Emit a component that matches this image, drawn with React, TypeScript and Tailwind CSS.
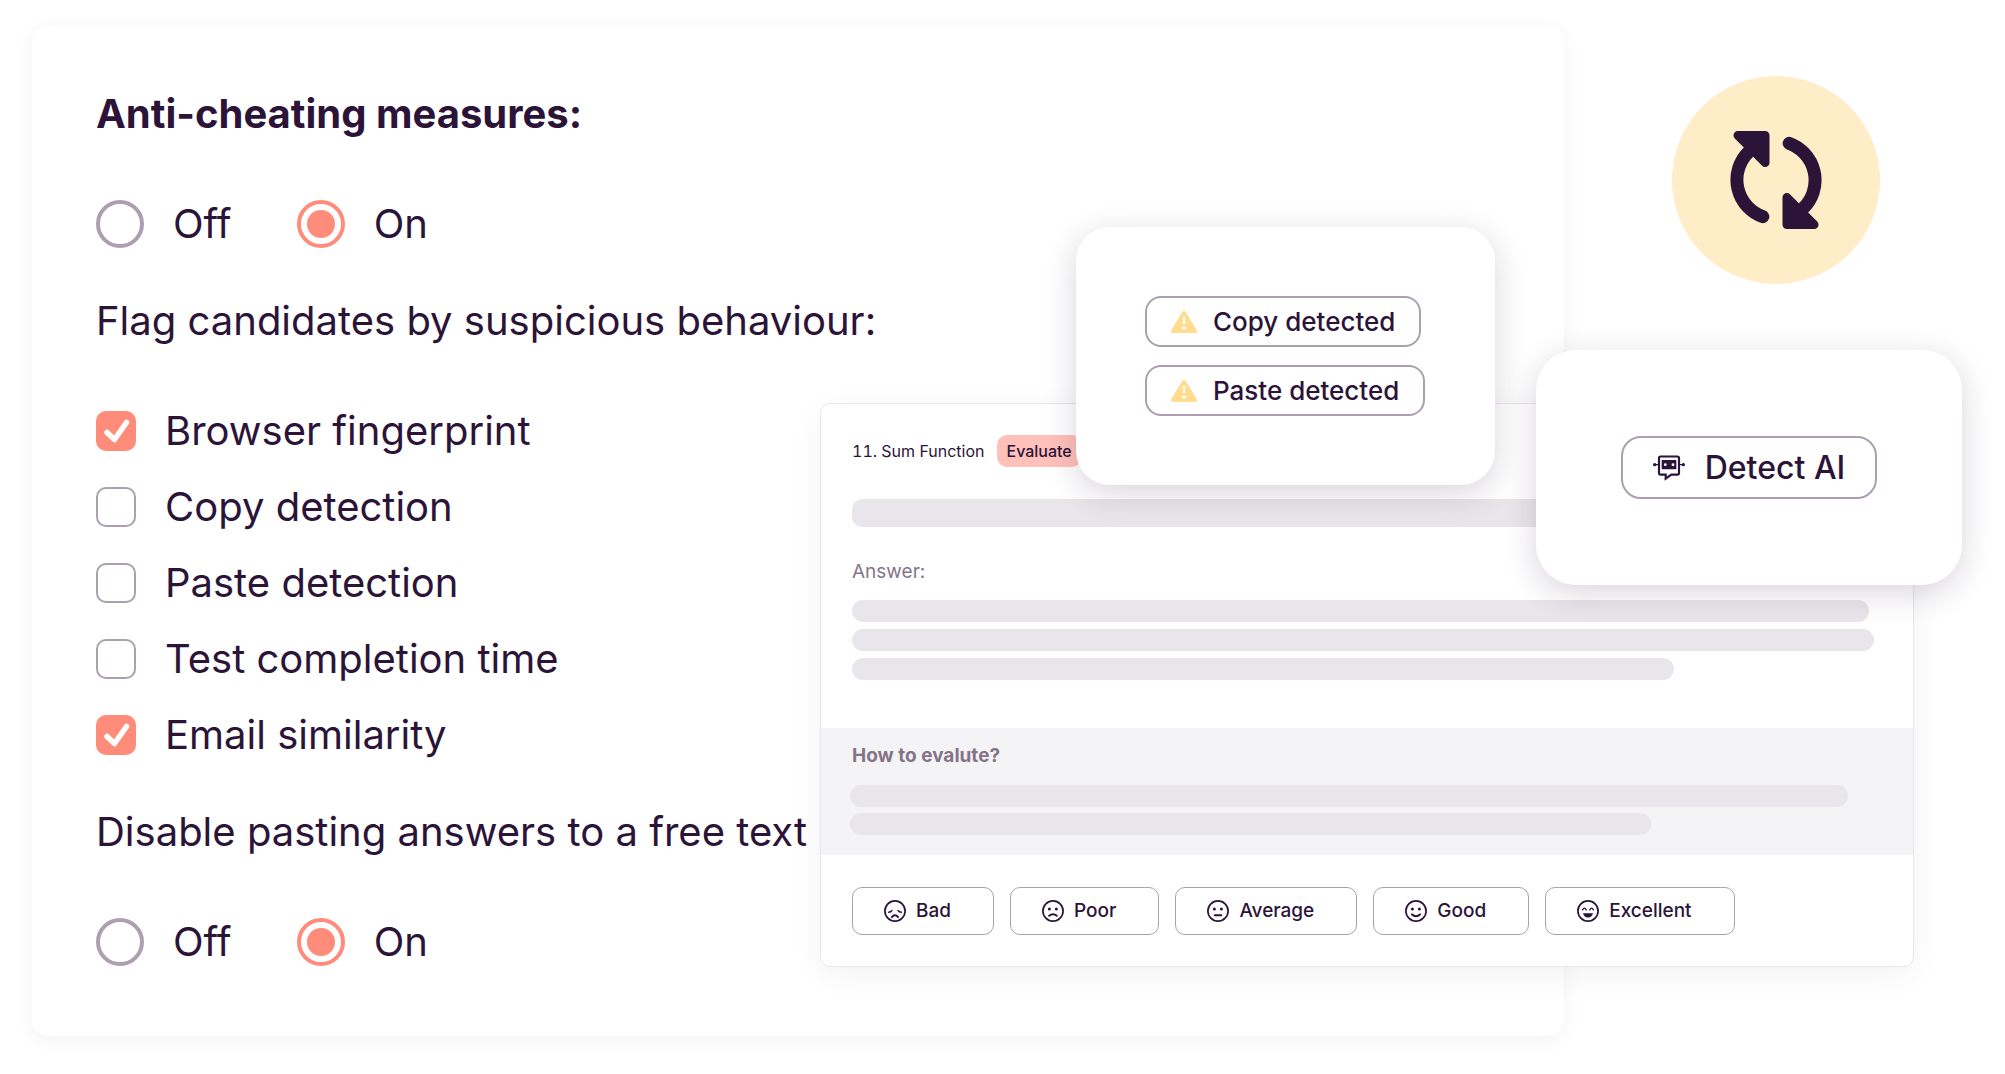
import { ReactNode, useState } from 'react';

const FLAGS = [
  { id: 'fingerprint', label: 'Browser fingerprint', checked: true },
  { id: 'copy', label: 'Copy detection', checked: false },
  { id: 'paste', label: 'Paste detection', checked: false },
  { id: 'time', label: 'Test completion time', checked: false },
  { id: 'email', label: 'Email similarity', checked: true },
];

const Face = ({ children }: { children: ReactNode }) => (
  <svg viewBox="0 0 24 24" className="size-6" fill="none" stroke="currentColor" strokeWidth="1.7" strokeLinecap="round" aria-hidden="true">
    <circle cx="12" cy="12" r="10.1" />
    {children}
  </svg>
);

const Eyes = () => (
  <g fill="currentColor" stroke="none">
    <circle cx="8.4" cy="10" r="1.5" />
    <circle cx="15.4" cy="10" r="1.5" />
  </g>
);

const RATINGS = [
  {
    label: 'Bad',
    icon: (
      <Face>
        <path d="M5.6 13.3 Q8 13.2 9 11.4M18.4 13.3 Q16 13.2 15 11.4" strokeWidth="1.4" />
        <path d="M9 18 Q12 14.6 15 18" strokeWidth="2" />
      </Face>
    ),
  },
  {
    label: 'Poor',
    icon: (
      <Face>
        <Eyes />
        <path d="M8.2 16.8 Q12 13.6 15.8 16.8" strokeWidth="2" />
      </Face>
    ),
  },
  {
    label: 'Average',
    icon: (
      <Face>
        <Eyes />
        <path d="M8.8 16.2 H15.2" strokeWidth="2" />
      </Face>
    ),
  },
  {
    label: 'Good',
    icon: (
      <Face>
        <Eyes />
        <path d="M8 15.4 Q12 19 16 15.4" strokeWidth="2" />
      </Face>
    ),
  },
  {
    label: 'Excellent',
    icon: (
      <Face>
        <path d="M6.6 10.8 Q8.4 7.4 10.2 10.8M13.8 10.8 Q15.6 7.4 17.4 10.8" strokeWidth="1.4" />
        <path d="M7 14.2 H17 Q15.8 18.6 12 18.6 Q8.2 18.6 7 14.2 Z" fill="currentColor" stroke="none" />
      </Face>
    ),
  },
];

const WarningIcon = () => (
  <svg viewBox="0 0 78 66" className="h-[22px] w-[26px]" aria-hidden="true">
    <path d="M39 6 L72 60 H6 Z" fill="#ffdc8f" stroke="#ffdc8f" strokeWidth="12" strokeLinejoin="round" />
    <path d="M39 21 V36" stroke="#fff" strokeWidth="7" strokeLinecap="round" />
    <circle cx="39" cy="51" r="5.5" fill="#fff" />
  </svg>
);

const RobotIcon = () => (
  <svg viewBox="0 0 96 78" className="h-[26px] w-8" fill="none" stroke="currentColor" strokeWidth="6.5" aria-hidden="true">
    <path d="M23 4.5 H73 a5 5 0 0 1 5 5 V54 a5 5 0 0 1 -5 5 H55 L38 71 V59 H23 a5 5 0 0 1 -5 -5 V9.5 a5 5 0 0 1 5 -5 Z" />
    <path d="M4 29 H18M78 29 H92" strokeWidth="4" />
    <g fill="currentColor" stroke="none">
      <circle cx="5" cy="29" r="5" />
      <circle cx="91" cy="29" r="5" />
      <rect x="26" y="15" width="44" height="28" rx="2" />
    </g>
    <g fill="#fff" stroke="none">
      <circle cx="37" cy="29" r="4.2" />
      <circle cx="60" cy="29" r="4.2" />
    </g>
  </svg>
);

const SyncIcon = () => (
  <svg viewBox="0 0 275 294" className="h-[98px] w-[92px] text-[#2b1438]" aria-hidden="true">
    <defs>
      <g id="sync-arrow">
        <path d="M98 257 A117.5 117.5 0 0 1 54 64" fill="none" stroke="currentColor" strokeWidth="39" strokeLinecap="round" />
        <path d="M23 13 H105 V95 Z" fill="currentColor" stroke="currentColor" strokeWidth="26" strokeLinejoin="round" />
      </g>
    </defs>
    <use href="#sync-arrow" />
    <use href="#sync-arrow" transform="rotate(180 137.5 147)" />
  </svg>
);

const OnOff = ({ name, label }: { name: string; label: string }) => {
  const [value, setValue] = useState('On');

  return (
    <div role="radiogroup" aria-label={label} className="flex gap-[65px]">
      {['Off', 'On'].map((option) => (
        <label key={option} className="flex items-center gap-[29px]">
          <input
            type="radio"
            name={name}
            value={option}
            checked={value === option}
            onChange={() => setValue(option)}
            className="size-12 appearance-none rounded-full border-4 border-[#ab9fb0] bg-clip-content p-1.5 checked:border-[#ff8b7b] checked:bg-[#ff8b7b]"
          />
          {option}
        </label>
      ))}
    </div>
  );
};

const SettingsCard = () => (
  <main className="mr-[441px] ml-8 rounded-2xl bg-white px-16 pt-16 pb-[70px] text-[40px] leading-[48px] shadow-[0_4px_20px_rgba(0,0,0,0.05)]">
    <h1 className="mb-[62px] font-bold">Anti-cheating measures:</h1>
    <OnOff name="measures" label="Anti-cheating measures" />
    <p className="mt-[49px] mb-[62px]">Flag candidates by suspicious behaviour:</p>
    <div className="flex flex-col gap-7">
      {FLAGS.map((flag) => (
        <label key={flag.id} className="flex items-center gap-[29px]">
          <span className="grid">
            <input
              type="checkbox"
              defaultChecked={flag.checked}
              className="peer col-start-1 row-start-1 size-10 appearance-none rounded-[10px] border-2 border-[#ab9fb0] checked:border-[#ff8b7b] checked:bg-[#ff8b7b]"
            />
            <svg
              viewBox="0 0 40 40"
              className="pointer-events-none invisible col-start-1 row-start-1 size-10 peer-checked:visible"
              fill="none"
              stroke="#fff"
              strokeWidth="5.5"
              strokeLinecap="round"
              strokeLinejoin="round"
              aria-hidden="true"
            >
              <path d="M11 21.5 L18.5 28.5 L30.5 11.5" />
            </svg>
          </span>
          {flag.label}
        </label>
      ))}
    </div>
    <p className="mt-[49px] mb-[62px]">Disable pasting answers to a free text</p>
    <OnOff name="pasting" label="Disable pasting answers to a free text" />
  </main>
);

const EvaluationCard = () => (
  <section className="absolute top-[403px] right-[91px] left-[820px] rounded-[10px] border border-[#e8e6ea] bg-white shadow-[0_8px_32px_rgba(0,0,0,0.05)]">
    <div className="px-[31px] pt-[31px] pb-12">
      <div className="flex items-center gap-3">
        <h2 className="text-base tabular-nums">11. Sum Function</h2>
        <span className="rounded-[10px] bg-[#ffc1ba] px-2.5 py-1 text-base font-medium">Evaluate</span>
      </div>
      <div className="mt-8 mr-4 h-7 rounded-[10px] bg-[#e8e6ea]"></div>
      <h3 className="mt-[31px] text-[19px] leading-7 text-[#857489]">Answer:</h3>
      <div className="mt-[14px] flex flex-col gap-[7px]">
        <div className="mr-[13px] h-[22px] rounded-[11px] bg-[#e8e6ea]"></div>
        <div className="mr-2 h-[22px] rounded-[11px] bg-[#e8e6ea]"></div>
        <div className="mr-52 h-[22px] rounded-[11px] bg-[#e8e6ea]"></div>
      </div>
    </div>
    <div className="bg-[#f4f4f6] px-[29px] pt-[14px] pb-5">
      <h3 className="px-0.5 text-[19px] leading-7 font-bold text-[#857489]">How to evalute?</h3>
      <div className="mt-[15px] flex flex-col gap-1.5">
        <div className="mr-9 h-[22px] rounded-[11px] bg-[#e8e6ea]"></div>
        <div className="mr-[233px] h-[22px] rounded-[11px] bg-[#e8e6ea]"></div>
      </div>
    </div>
    <div className="flex gap-4 px-[31px] pt-8 pb-[31px]">
      {RATINGS.map((rating) => (
        <button
          key={rating.label}
          type="button"
          className="flex h-12 items-center gap-[9px] rounded-[10px] border border-[#ab9fb0] pr-[42px] pl-[30px] text-[19px] leading-7 font-medium"
        >
          {rating.icon}
          {rating.label}
        </button>
      ))}
    </div>
  </section>
);

const App = () => (
  <div className="relative min-h-screen overflow-hidden bg-white pt-[26px] pb-[38px] font-['Inter',sans-serif] text-[#2b1438]">
    <SettingsCard />
    <EvaluationCard />

    {/* Flags raised on the answer */}
    <div className="absolute top-[227px] right-[510px] flex h-[258px] w-[419px] flex-col items-start justify-center gap-[18px] rounded-[34px] bg-white pl-[69px] shadow-[0_8px_32px_rgba(43,20,56,0.18)]">
      {['Copy detected', 'Paste detected'].map((text) => (
        <div key={text} className="flex h-[51px] items-center gap-4 rounded-2xl border-2 border-[#ab9fb0] px-6 text-[26px] leading-8 font-medium">
          <WarningIcon />
          {text}
        </div>
      ))}
    </div>

    <div className="absolute top-[350px] right-[43px] flex h-[235px] w-[426px] items-center justify-center rounded-[40px] bg-white shadow-[0_8px_32px_rgba(43,20,56,0.18)]">
      <button type="button" className="flex h-[63px] items-center gap-5 rounded-[20px] border-2 border-[#ab9fb0] px-[30px] text-[32px] leading-10 font-medium">
        <RobotIcon />
        Detect AI
      </button>
    </div>

    <div className="absolute top-[76px] right-[125px] flex size-52 items-center justify-center rounded-full bg-[#ffedc8]">
      <SyncIcon />
    </div>
  </div>
);

export default App;
